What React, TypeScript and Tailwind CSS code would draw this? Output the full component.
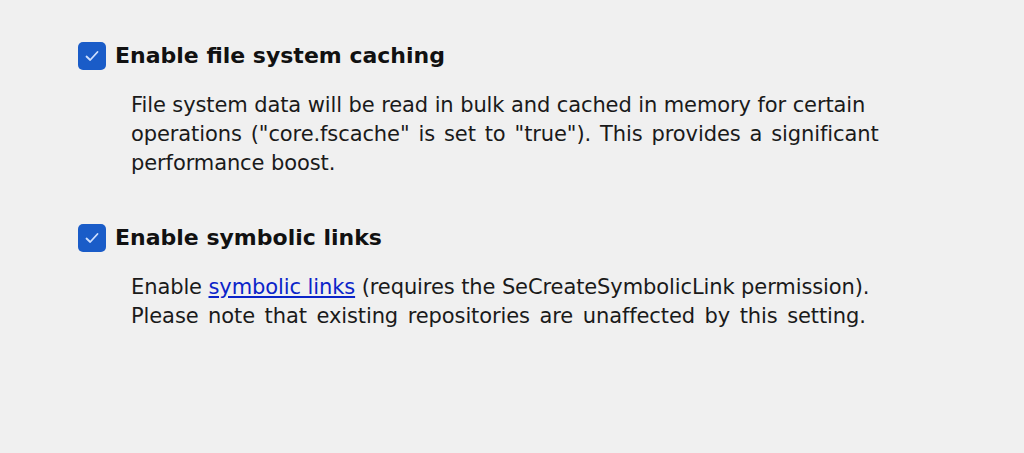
import React from "react";

function Check() {
  return (
    <div className="w-[28px] h-[28px] rounded-[5px] bg-[#1a5cc8] flex items-center justify-center shrink-0">
      <svg width="18" height="18" viewBox="0 0 18 18" fill="none">
        <path d="M3.5 9.5 L7.2 13 L14.5 5" stroke="#cfe0ff" strokeWidth="1.8" strokeLinecap="round" strokeLinejoin="round" />
      </svg>
    </div>
  );
}

export default function App() {
  return (
    <div className="w-[1024px] h-[453px] bg-[#f0f0f0] text-[#111] overflow-hidden" style={{ fontFamily: '"DejaVu Sans", Verdana, sans-serif' }}>
      <div className="pl-[78px] pt-[42px] flex flex-col">
        <div className="flex items-center gap-[9px] h-[28px]">
          <Check />
          <span className="text-[22px] font-bold leading-none">Enable file system caching</span>
        </div>
        <div className="pl-[53px] pt-[21px] text-[21px] leading-[29px] text-[#1a1a1a] tracking-[-0.1px]">
          File system data will be read in bulk and cached in memory for certain
          <br />
          <span className="[word-spacing:2.4px]">operations ("core.fscache" is set to "true"). This provides a significant</span>
          <br />
          performance boost.
        </div>
        <div className="flex items-center gap-[9px] h-[28px] mt-[46px]">
          <Check />
          <span className="text-[22px] font-bold leading-none">Enable symbolic links</span>
        </div>
        <div className="pl-[53px] pt-[21px] text-[21px] leading-[29px] text-[#1a1a1a] tracking-[-0.1px]">
          Enable <span className="text-[#0b24c9] underline">symbolic links</span> (requires the SeCreateSymbolicLink permission).
          <br />
          <span className="[word-spacing:3px]">Please note that existing repositories are unaffected by this setting.</span>
        </div>
      </div>
    </div>
  );
}
